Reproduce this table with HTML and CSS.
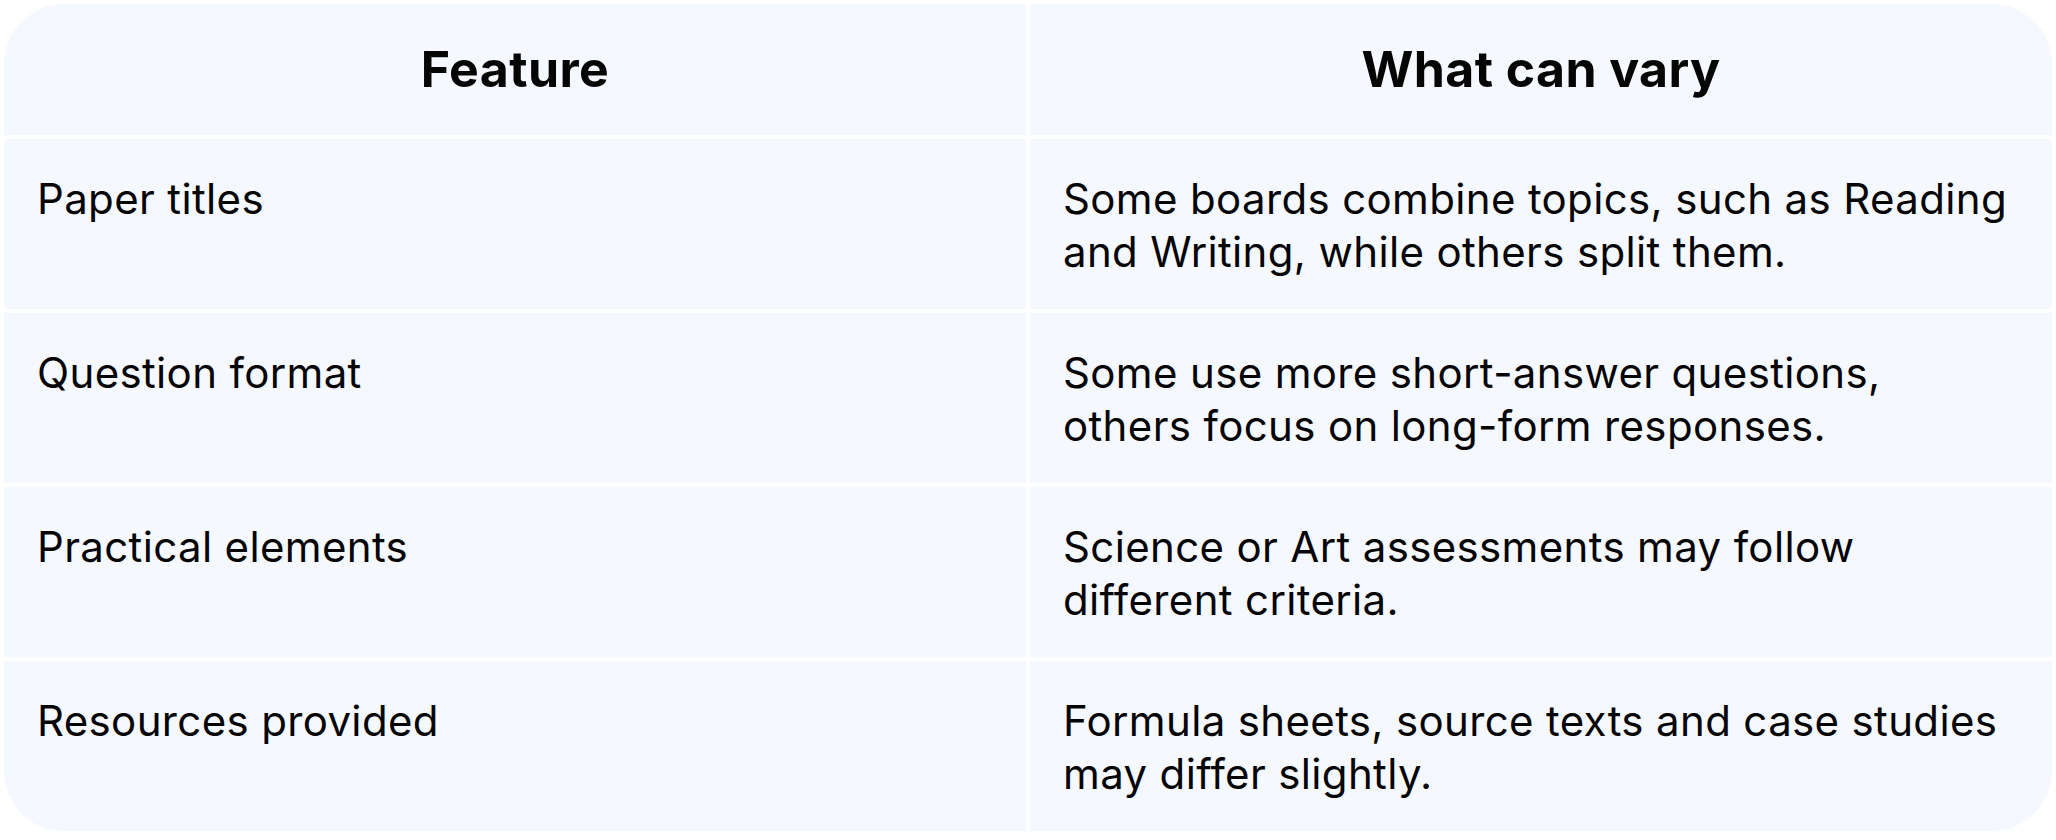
FILE: index.html
```html
<!DOCTYPE html>
<html lang="en">
<head>
<meta charset="utf-8">
<title>Feature comparison</title>
<link rel="stylesheet" href="styles.css">
</head>
<body>
<table class="compare">
  <thead>
    <tr>
      <th class="head-cell">Feature</th>
      <th class="head-cell">What can vary</th>
    </tr>
  </thead>
  <tbody>
    <tr>
      <td class="cell">Paper titles</td>
      <td class="cell">Some boards combine topics, such as Reading and Writing, while others split them.</td>
    </tr>
    <tr>
      <td class="cell">Question format</td>
      <td class="cell">Some use more short-answer questions, others focus on long-form responses.</td>
    </tr>
    <tr>
      <td class="cell">Practical elements</td>
      <td class="cell">Science or Art assessments may follow different criteria.</td>
    </tr>
    <tr>
      <td class="cell">Resources provided</td>
      <td class="cell">Formula sheets, source texts and case studies may differ slightly.</td>
    </tr>
  </tbody>
</table>
</body>
</html>
```
FILE: styles.css
```css
html, body {
  margin: 0;
  padding: 0;
  background: #ffffff;
}

body {
  font-family: "Inter", "Liberation Sans", sans-serif;
  color: #050505;
}

.compare {
  width: 100%;
  table-layout: fixed;
  border-collapse: separate;
  border-spacing: 4px;
}

.head-cell {
  background: #f5f8fe;
  font-size: 50px;
  font-weight: 700;
  line-height: 67px;
  padding: 32px;
  text-align: center;
  letter-spacing: 0.4px;
}

.cell {
  background: #f5f8fe;
  font-size: 42px;
  font-weight: 400;
  line-height: 53px;
  letter-spacing: 0.35px;
  padding: 33px 38px 31px 33px;
  text-align: left;
  vertical-align: top;
}

thead tr .head-cell:first-child {
  border-top-left-radius: 60px;
}

thead tr .head-cell:last-child {
  border-top-right-radius: 60px;
}

tbody tr:last-child .cell:first-child {
  border-bottom-left-radius: 60px;
}

tbody tr:last-child .cell:last-child {
  border-bottom-right-radius: 60px;
}
```
